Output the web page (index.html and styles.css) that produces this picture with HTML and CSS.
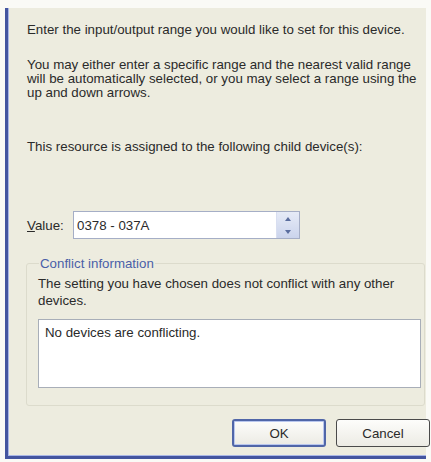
FILE: index.html
```html
<!DOCTYPE html>
<html lang="en">
<head>
  <meta charset="UTF-8">
  <title>Edit Input/Output Range</title>
  <link rel="stylesheet" href="styles.css">
</head>
<body>

  <div class="dialog">
    <p class="intro">Enter the input/output range you would like to set for this device.</p>
    <p class="help">You may either enter a specific range and the nearest valid range will be automatically selected, or you may select a range using the up and down arrows.</p>
    <p class="assigned">This resource is assigned to the following child device(s):</p>

    <div class="value-row">
      <label for="rangeValue"><u>V</u>alue:</label>
      <div class="spin">
        <input type="text" id="rangeValue" value="0378 - 037A">
        <div class="spin-btns">
          <span class="arrow up"></span>
          <span class="arrow down"></span>
        </div>
      </div>
    </div>

    <fieldset class="conflict">
      <legend>Conflict information</legend>
      <p>The setting you have chosen does not conflict with any other devices.</p>
      <div class="conflict-list">No devices are conflicting.</div>
    </fieldset>

    <div class="buttons">
      <button type="button" class="btn btn-default">OK</button>
      <button type="button" class="btn">Cancel</button>
    </div>
  </div>

</body>
</html>
```

FILE: styles.css
```css
body {
  margin: 0;
  background-color: #fafaf6;
  font-family: 'Liberation Sans', Arial, sans-serif;
  font-size: 13.3px;
  color: #2a2a2a;
}
.dialog {
  margin: 8px 0 0 5px;
  height: 451px;
  width: 421px;
  box-sizing: border-box;
  padding: 0 0 0 19px;
  background-color: #edecdf;
  border-left: 3px solid #44559f;
  border-bottom: 3px solid #44559f;
  box-shadow: inset 1px 0 0 #a9b6e6, inset 0 -1px 0 #a9b6e6;
}
p {
  margin: 0;
  line-height: 14px;
}
.intro {
  padding-top: 15px;
}
.help {
  margin-top: 21px;
  padding-right: 4px;
}
.assigned {
  margin-top: 40px;
}
.value-row {
  display: flex;
  align-items: center;
  margin-top: 57px;
}
.value-row label {
  width: 46px;
}
.spin {
  display: flex;
  width: 227px;
  height: 28px;
  box-sizing: border-box;
  border: 1px solid #a5aec6;
  background-color: #fff;
}
.spin input {
  flex: 1;
  min-width: 0;
  border: none;
  outline: none;
  padding: 0 0 0 3px;
  font: inherit;
  color: #2a2a2a;
  background: transparent;
}
.spin-btns {
  width: 22px;
  display: flex;
  flex-direction: column;
  background: linear-gradient(#e6ebf7, #cbd4ec);
  border-left: 1px solid #d8def0;
}
.arrow {
  flex: 1;
  display: flex;
  align-items: center;
  justify-content: center;
}
.arrow::before {
  content: '';
  border-left: 3px solid transparent;
  border-right: 3px solid transparent;
}
.up::before {
  border-bottom: 4px solid #5a6d9e;
}
.down::before {
  border-top: 4px solid #5a6d9e;
}
.conflict {
  margin: 17px 1px 0 -1px;
  padding: 4px 3px 17px 11px;
  border: 1px solid #dcdbcc;
  border-radius: 3px;
}
.conflict legend {
  padding: 0 1px;
  margin-left: 1px;
  color: #4a5fa8;
}
.conflict p {
  line-height: 17px;
}
.conflict-list {
  margin-top: 10px;
  height: 69px;
  box-sizing: border-box;
  border: 1px solid #a8aeb8;
  background-color: #fff;
  padding: 5px 6px;
}
.buttons {
  display: flex;
  justify-content: flex-end;
  gap: 10px;
  margin-top: 13px;
  margin-right: -4px;
}
.btn {
  width: 94px;
  height: 28px;
  font: inherit;
  color: #2a2a2a;
  background: linear-gradient(#fdfdfb, #ecebe4);
  border: 1px solid #4a4a4a;
  border-radius: 3px;
}
.btn-default {
  border: 2px solid #5066a8;
  box-shadow: inset 0 0 0 1px #b9c7ee;
}
```
